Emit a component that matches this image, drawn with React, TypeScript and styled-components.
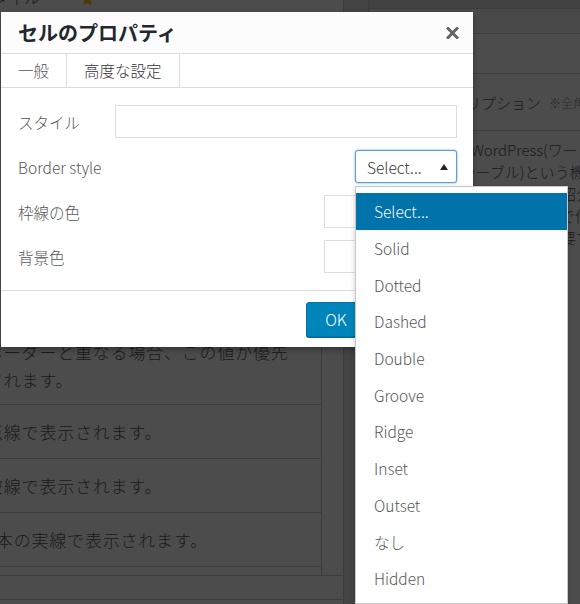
import React from "react";
import styled, { createGlobalStyle } from "styled-components";

const GlobalStyle = createGlobalStyle`
  * { box-sizing: border-box; }
  html, body { margin: 0; padding: 0; width: 580px; height: 604px; overflow: hidden; }
  body {
    font-family: "Noto Sans CJK JP", "Noto Sans", sans-serif;
    font-weight: 300;
    background: #f1f1f1;
  }
`;

const Viewport = styled.div`
  position: relative;
  width: 580px;
  height: 604px;
  overflow: hidden;
`;

/* ---------- page behind the dialog ---------- */

const Page = styled.div`
  display: flex;
  width: 580px;
  height: 604px;
  background: #f1f1f1;
  color: #5a5a5a;
`;

const MainColumn = styled.div`
  width: 344px;
  flex: none;
  display: flex;
  flex-direction: column;
  background: #fff;
  border-right: 1px solid #c8c8c8;
`;

const TopStrip = styled.div`
  height: 12px;
  flex: none;
  overflow: hidden;
  display: flex;
  align-items: flex-end;
  gap: 40px;
`;

const StripLabel = styled.span`
  margin-left: -24px;
  font-size: 16px;
  line-height: 30px;
  white-space: nowrap;
`;

const StarIcon = styled.svg`
  width: 15px;
  height: 15px;
  margin-bottom: 5px;
  flex: none;
`;

const TableArea = styled.div`
  display: flex;
  padding-right: 21px;
  border-bottom: 1px solid #c8c8c8;
`;

const Table = styled.div`
  width: 322px;
  display: flex;
  flex-direction: column;
  border-right: 1px solid #c8c8c8;
`;

const DescRow = styled.div`
  height: 392px;
  display: flex;
  flex-direction: column;
  justify-content: flex-end;
  padding-bottom: 10px;
`;

const TableRow = styled.div<{ $last?: boolean }>`
  height: ${(p) => (p.$last ? 55 : 54)}px;
  display: flex;
  align-items: center;
  border-top: 1px solid #c8c8c8;
  ${(p) => (p.$last ? "border-bottom: 1px solid #c8c8c8;" : "")}
`;

const TableTail = styled.div`
  height: 8px;
`;

const CellText = styled.div`
  margin-left: -14px;
  font-size: 17px;
  line-height: 28px;
  letter-spacing: 0.8px;
  white-space: nowrap;
`;

const BoxSection = styled.div`
  height: 24px;
  border-bottom: 1px solid #c8c8c8;
`;

const Gutter = styled.div`
  width: 24px;
  flex: none;
  background: #e2e2e2;
`;

const Sidebar = styled.div`
  flex: 1;
  min-width: 0;
  display: flex;
  flex-direction: column;
  background: #fff;
  border-left: 1px solid #c8c8c8;
  overflow: hidden;
`;

const SideBand = styled.div`
  height: 9px;
  flex: none;
  background: #dedede;
  border-bottom: 1px solid #c8c8c8;
`;

const SideRow = styled.div<{ $h: number; $shade?: boolean }>`
  height: ${(p) => p.$h}px;
  flex: none;
  background: ${(p) => (p.$shade ? "#f4f4f4" : "#fff")};
  border-bottom: 1px solid #d4d4d4;
`;

const SideHeader = styled.div`
  height: 57px;
  flex: none;
  display: flex;
  align-items: center;
  gap: 8px;
  padding-left: 8px;
  border-bottom: 1px solid #d4d4d4;
  white-space: nowrap;
`;

const SideHeading = styled.span`
  font-size: 15px;
  color: #5a5a5a;
`;

const SideNote = styled.span`
  font-size: 12px;
  color: #888;
`;

const SideBody = styled.div`
  padding: 8px 0 0 57px;
  display: flex;
  flex-direction: column;
`;

const SideLine = styled.div`
  font-size: 15px;
  line-height: 22px;
  white-space: nowrap;
`;

const Backdrop = styled.div`
  position: absolute;
  inset: 0;
  background: rgba(0, 0, 0, 0.7);
`;

/* ---------- dialog ---------- */

const Dialog = styled.div`
  position: absolute;
  left: 1px;
  top: 12px;
  width: 472px;
  display: flex;
  flex-direction: column;
  background: #fff;
  box-shadow: 0 3px 6px rgba(0, 0, 0, 0.3);
  color: #555;
`;

const DialogHeader = styled.div`
  height: 42px;
  display: flex;
  align-items: center;
  justify-content: space-between;
  padding: 0 14px 0 17px;
  background: #fcfcfc;
  border-bottom: 1px solid #dcdcdc;
`;

const Title = styled.h1`
  margin: 0;
  font-size: 20px;
  line-height: 1;
  font-weight: 700;
  color: #23282d;
`;

const CloseButton = styled.button`
  width: 13px;
  height: 12px;
  padding: 0;
  border: 0;
  background: none;
  display: flex;
  cursor: pointer;
`;

const TabBar = styled.div`
  height: 34px;
  display: flex;
  border-bottom: 1px solid #dcdcdc;
`;

const Tab = styled.div<{ $active?: boolean }>`
  display: flex;
  align-items: center;
  padding: 0 17px 1px;
  font-size: 15.5px;
  color: ${(p) => (p.$active ? "#333" : "#555")};
  background: #fff;
  border-right: 1px solid #dcdcdc;
`;

const Body = styled.div`
  display: flex;
  flex-direction: column;
  gap: 12px;
  padding: 17px 16px 17px 17px;
  border-bottom: 1px solid #dcdcdc;
`;

const FieldRow = styled.div`
  height: 33px;
  display: flex;
  align-items: center;
`;

const Label = styled.label`
  width: 97px;
  flex: none;
  font-size: 15.5px;
  color: #555;
  white-space: nowrap;
`;

const TextInput = styled.div`
  flex: 1;
  height: 33px;
  border: 1px solid #ddd;
  background: #fff;
`;

const ColorInput = styled.div`
  margin-left: auto;
  width: 133px;
  height: 33px;
  border: 1px solid #ddd;
  background: #fff;
`;

const SelectBox = styled.div`
  position: relative;
  margin-left: auto;
  width: 102px;
  height: 33px;
  display: flex;
  align-items: center;
  justify-content: space-between;
  padding: 0 8px 0 11px;
  background: #fff;
  border: 1px solid #5b9dd9;
  border-radius: 3px;
  box-shadow: 0 0 2px rgba(30, 140, 190, 0.8);
  font-size: 15.5px;
  color: #333;
`;

const ArrowIcon = styled.svg`
  width: 8px;
  height: 6px;
  flex: none;
`;

const Listbox = styled.ul`
  position: absolute;
  top: 35px;
  left: -1px;
  width: 213px;
  margin: 0;
  padding: 6px 0;
  list-style: none;
  background: #fff;
  border: 1px solid #c8c8c8;
  box-shadow: 0 2px 5px rgba(0, 0, 0, 0.2);
  z-index: 2;
`;

const Option = styled.li<{ $selected?: boolean }>`
  height: 36.7px;
  display: flex;
  align-items: center;
  padding-left: 18px;
  font-size: 15.5px;
  color: ${(p) => (p.$selected ? "#fff" : "#555")};
  background: ${(p) => (p.$selected ? "#0073aa" : "#fff")};
`;

const Footer = styled.div`
  height: 56px;
  display: flex;
  align-items: center;
  justify-content: flex-end;
  gap: 6px;
  padding: 0 16px;
`;

const Button = styled.button<{ $primary?: boolean; $w: number }>`
  width: ${(p) => p.$w}px;
  height: 35px;
  padding: 0;
  border-radius: 3px;
  font-family: inherit;
  font-weight: 300;
  font-size: 16px;
  cursor: pointer;
  color: ${(p) => (p.$primary ? "#fff" : "#555")};
  background: ${(p) => (p.$primary ? "#0085ba" : "#f7f7f7")};
  border: 1px solid ${(p) => (p.$primary ? "#0073aa" : "#ccc")};
  box-shadow: 0 1px 0 ${(p) => (p.$primary ? "#006799" : "#ccc")};
`;

const options = [
  "Select...",
  "Solid",
  "Dotted",
  "Dashed",
  "Double",
  "Groove",
  "Ridge",
  "Inset",
  "Outset",
  "なし",
  "Hidden",
];

const sideLines = [
  "記事にWordPress(ワードプレス)の",
  "表の(テーブル)という機能を使って",
  "表を使用した記事の紹介文を書く",
  "クラシックエディタで作成する",
  "設定をするときに必要です。",
];

export default function App() {
  return (
    <>
      <GlobalStyle />
      <Viewport>
        <Page>
          <MainColumn>
            <TopStrip>
              <StripLabel>スタイル</StripLabel>
              <StarIcon viewBox="0 0 24 24">
                <path
                  d="M12 1.5l3.1 6.6 7.2.9-5.3 5 1.4 7.1L12 17.6l-6.4 3.5L7 14l-5.3-5 7.2-.9z"
                  fill="#ffc21a"
                />
              </StarIcon>
            </TopStrip>
            <TableArea>
              <Table>
                <DescRow>
                  <CellText>ボーダーと重なる場合、この値が優先</CellText>
                  <CellText>されます。</CellText>
                </DescRow>
                <TableRow>
                  <CellText>点線で表示されます。</CellText>
                </TableRow>
                <TableRow>
                  <CellText>破線で表示されます。</CellText>
                </TableRow>
                <TableRow $last>
                  <CellText>2本の実線で表示されます。</CellText>
                </TableRow>
                <TableTail />
              </Table>
            </TableArea>
            <BoxSection />
          </MainColumn>
          <Gutter />
          <Sidebar>
            <SideBand />
            <SideRow $h={25} $shade />
            <SideRow $h={40} />
            <SideHeader>
              <SideHeading>メタディスクリプション</SideHeading>
              <SideNote>※全角120文字以内</SideNote>
            </SideHeader>
            <SideBody>
              {sideLines.map((l) => (
                <SideLine key={l}>{l}</SideLine>
              ))}
            </SideBody>
          </Sidebar>
        </Page>
        <Backdrop />
        <Dialog>
          <DialogHeader>
            <Title>セルのプロパティ</Title>
            <CloseButton aria-label="閉じる">
              <svg width="13" height="12" viewBox="0 0 13 12">
                <path
                  d="M2 1.5L11 10.5M11 1.5L2 10.5"
                  stroke="#646464"
                  strokeWidth="3"
                  strokeLinecap="square"
                />
              </svg>
            </CloseButton>
          </DialogHeader>
          <TabBar>
            <Tab>一般</Tab>
            <Tab $active>高度な設定</Tab>
          </TabBar>
          <Body>
            <FieldRow>
              <Label>スタイル</Label>
              <TextInput />
            </FieldRow>
            <FieldRow>
              <Label>Border style</Label>
              <SelectBox>
                <span>Select...</span>
                <ArrowIcon viewBox="0 0 8 6">
                  <path d="M4 0L8 6H0z" fill="#222" />
                </ArrowIcon>
                <Listbox>
                  {options.map((o, i) => (
                    <Option key={o} $selected={i === 0}>
                      {o}
                    </Option>
                  ))}
                </Listbox>
              </SelectBox>
            </FieldRow>
            <FieldRow>
              <Label>枠線の色</Label>
              <ColorInput />
            </FieldRow>
            <FieldRow>
              <Label>背景色</Label>
              <ColorInput />
            </FieldRow>
          </Body>
          <Footer>
            <Button $primary $w={60}>OK</Button>
            <Button $w={85}>キャンセル</Button>
          </Footer>
        </Dialog>
      </Viewport>
    </>
  );
}
